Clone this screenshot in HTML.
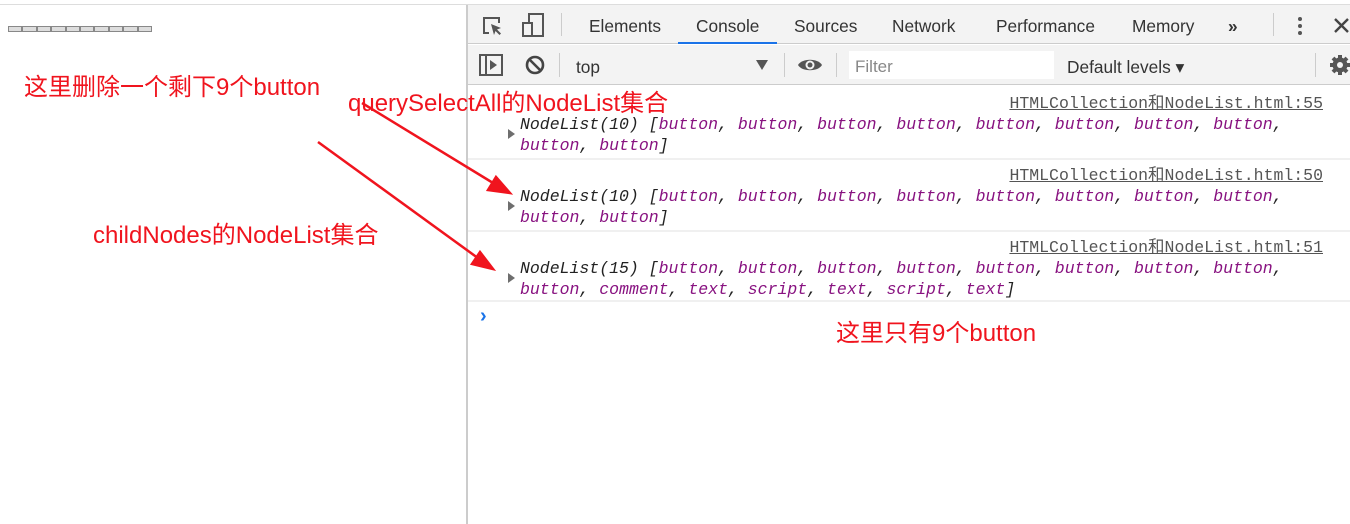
<!DOCTYPE html>
<html><head><meta charset="utf-8"><style>
*{margin:0;padding:0;box-sizing:border-box}
body{width:1350px;height:524px;background:#fff;position:relative;overflow:hidden;font-family:"Liberation Sans","Noto Sans CJK SC",sans-serif}
.a{position:absolute}
.tab{position:absolute;top:16px;font-size:17.3px;color:#333}
.mono{font-family:"Liberation Mono",monospace;font-style:italic;font-size:16.5px;color:#222;white-space:pre;position:absolute;left:520px;line-height:21px}
.p{color:#881280}
.link{position:absolute;right:27px;font-family:"Liberation Mono","Noto Sans CJK SC",monospace;font-size:16.5px;color:#555;text-decoration:underline}
.tri{position:absolute;left:508px;width:0;height:0;border-left:7px solid #6e6e6e;border-top:5px solid transparent;border-bottom:5px solid transparent}
.red{position:absolute;color:#f0141e;font-size:24px;font-family:"Liberation Sans","Noto Sans CJK SC",sans-serif;white-space:nowrap}
.sep{position:absolute;width:1px;background:#ccc}
.rowb{position:absolute;left:468px;right:0;height:2px;background:#f0f0f0}
</style></head><body>
<div class="a" style="left:0;top:4px;width:1350px;height:1px;background:#ddd"></div>
<div class="a" style="left:8px;top:26px;display:flex">
<div style="width:14.4px;height:6px;border:1px solid #888;background:#ddd"></div><div style="width:14.4px;height:6px;border:1px solid #888;background:#ddd"></div><div style="width:14.4px;height:6px;border:1px solid #888;background:#ddd"></div><div style="width:14.4px;height:6px;border:1px solid #888;background:#ddd"></div><div style="width:14.4px;height:6px;border:1px solid #888;background:#ddd"></div><div style="width:14.4px;height:6px;border:1px solid #888;background:#ddd"></div><div style="width:14.4px;height:6px;border:1px solid #888;background:#ddd"></div><div style="width:14.4px;height:6px;border:1px solid #888;background:#ddd"></div><div style="width:14.4px;height:6px;border:1px solid #888;background:#ddd"></div><div style="width:14.4px;height:6px;border:1px solid #888;background:#ddd"></div>
</div>
<div class="a" style="left:466px;top:5px;width:2px;height:519px;background:#ccc"></div>
<div class="a" style="left:468px;top:5px;right:0;height:39px;background:#f3f3f3;border-bottom:1px solid #ccc"></div>
<div class="a" style="left:468px;top:45px;right:0;height:40px;background:#f3f3f3;border-bottom:1px solid #ccc"></div>
<svg class="a" style="left:480px;top:14px" width="24" height="24" viewBox="0 0 24 24" fill="none" stroke="#555" stroke-width="2"><path d="M9 19H4V4h15v5"/><path d="M11 10l10 4-4 1.5 4 4-1.5 1.5-4-4L14 21z" fill="#555" stroke="none"/></svg>
<svg class="a" style="left:521px;top:12px" width="24" height="26" viewBox="0 0 24 26" fill="none" stroke="#555" stroke-width="2"><rect x="8" y="2" width="14" height="22"/><rect x="2" y="11" width="9" height="13" fill="#f3f3f3"/></svg>
<div class="sep" style="left:561px;top:13px;height:23px"></div>
<div class="tab" style="left:589px">Elements</div>
<div class="tab" style="left:696px">Console</div>
<div class="a" style="left:678px;top:42px;width:99px;height:2px;background:#1a73e8"></div>
<div class="tab" style="left:794px">Sources</div>
<div class="tab" style="left:892px">Network</div>
<div class="tab" style="left:996px">Performance</div>
<div class="tab" style="left:1132px">Memory</div>
<div class="tab" style="left:1228px;font-weight:bold">»</div>
<div class="sep" style="left:1273px;top:13px;height:23px"></div>
<div class="a" style="left:1298px;top:17px;width:4px;height:4px;border-radius:2px;background:#555;box-shadow:0 7px 0 #555,0 14px 0 #555"></div>
<svg class="a" style="left:1333px;top:17px" width="17" height="17" viewBox="0 0 17 17" stroke="#444" stroke-width="2.4"><path d="M2 2l13 13M15 2L2 15"/></svg>
<svg class="a" style="left:479px;top:54px" width="24" height="22" viewBox="0 0 24 22" fill="none" stroke="#555" stroke-width="2"><rect x="1" y="1" width="22" height="20"/><path d="M7 1v20"/><path d="M11 6l7 5-7 5z" fill="#555" stroke="none"/></svg>
<svg class="a" style="left:525px;top:55px" width="20" height="20" viewBox="0 0 20 20" fill="none" stroke="#444" stroke-width="2.6"><circle cx="10" cy="10" r="8"/><path d="M4.5 4.5l11 11"/></svg>
<div class="sep" style="left:559px;top:53px;height:24px"></div>
<div class="a" style="left:576px;top:57px;font-size:17.3px;color:#333">top</div>
<div class="a" style="left:756px;top:60px;width:0;height:0;border-top:10px solid #555;border-left:6px solid transparent;border-right:6px solid transparent"></div>
<div class="sep" style="left:784px;top:53px;height:24px"></div>
<svg class="a" style="left:797px;top:56px" width="26" height="18" viewBox="0 0 26 18"><path d="M1 9C5 2 21 2 25 9 21 16 5 16 1 9z" fill="#555"/><circle cx="13" cy="9" r="4.5" fill="#f3f3f3"/><circle cx="13" cy="9" r="2.5" fill="#555"/></svg>
<div class="sep" style="left:836px;top:53px;height:24px"></div>
<div class="a" style="left:849px;top:51px;width:205px;height:28px;background:#fff"></div>
<div class="a" style="left:855px;top:57px;font-size:17px;color:#888">Filter</div>
<div class="a" style="left:1067px;top:57px;font-size:17.3px;color:#333">Default levels ▾</div>
<div class="sep" style="left:1315px;top:53px;height:24px"></div>
<svg class="a" style="left:1329px;top:54px" width="22" height="22" viewBox="0 0 22 22"><circle cx="11" cy="11" r="7.5" fill="#555"/><g stroke="#555" stroke-width="4"><path d="M11 1v20M1 11h20M4 4l14 14M18 4L4 18"/></g><circle cx="11" cy="11" r="3" fill="#f3f3f3"/></svg>
<div class="link" style="top:89px">HTMLCollection和NodeList.html:55</div>
<div class="tri" style="top:129px"></div>
<div class="mono" style="top:114px">NodeList(10) [<span class="p">button</span>, <span class="p">button</span>, <span class="p">button</span>, <span class="p">button</span>, <span class="p">button</span>, <span class="p">button</span>, <span class="p">button</span>, <span class="p">button</span>,
<span class="p">button</span>, <span class="p">button</span>]</div>
<div class="rowb" style="top:158px"></div>
<div class="link" style="top:161px">HTMLCollection和NodeList.html:50</div>
<div class="tri" style="top:201px"></div>
<div class="mono" style="top:186px">NodeList(10) [<span class="p">button</span>, <span class="p">button</span>, <span class="p">button</span>, <span class="p">button</span>, <span class="p">button</span>, <span class="p">button</span>, <span class="p">button</span>, <span class="p">button</span>,
<span class="p">button</span>, <span class="p">button</span>]</div>
<div class="rowb" style="top:230px"></div>
<div class="link" style="top:233px">HTMLCollection和NodeList.html:51</div>
<div class="tri" style="top:273px"></div>
<div class="mono" style="top:258px">NodeList(15) [<span class="p">button</span>, <span class="p">button</span>, <span class="p">button</span>, <span class="p">button</span>, <span class="p">button</span>, <span class="p">button</span>, <span class="p">button</span>, <span class="p">button</span>,
<span class="p">button</span>, <span class="p">comment</span>, <span class="p">text</span>, <span class="p">script</span>, <span class="p">text</span>, <span class="p">script</span>, <span class="p">text</span>]</div>
<div class="rowb" style="top:300px"></div>
<div class="a" style="left:480px;top:305px;font-size:20px;color:#1a73e8;font-weight:bold">›</div>
<div class="red" style="left:24px;top:67px">这里删除一个剩下9个button</div>
<div class="red" style="left:348px;top:83px">querySelectAll的NodeList集合</div>
<div class="red" style="left:93px;top:215px">childNodes的NodeList集合</div>
<div class="red" style="left:836px;top:313px">这里只有9个button</div>
<svg class="a" style="left:0;top:0" width="1350" height="524">
<g stroke="#f0141e" stroke-width="2.5" fill="#f0141e">
<line x1="362" y1="103" x2="498" y2="186"/><path d="M510 193L488 190 496 177z"/>
<line x1="318" y1="142" x2="482" y2="261"/><path d="M493 269L472 264 480 252z"/>
</g></svg>
</body></html>
